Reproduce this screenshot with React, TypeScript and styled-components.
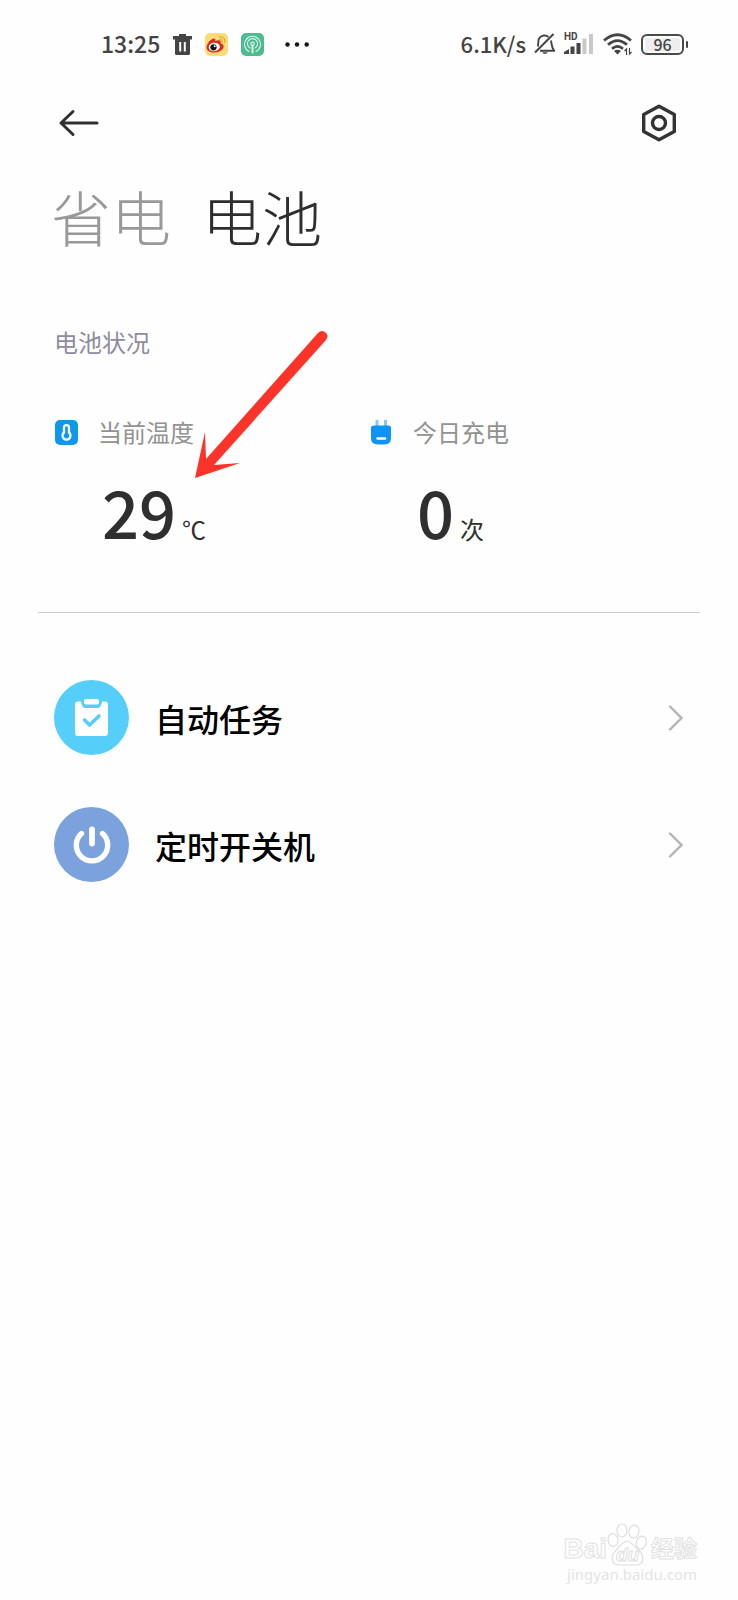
import React from 'react';
import styled, { createGlobalStyle } from 'styled-components';

const GlobalStyle = createGlobalStyle`
  * { box-sizing: border-box; }
  body {
    margin: 0;
    background: #fefefe;
    color: #333;
    font-family: "Noto Sans CJK SC", sans-serif;
  }
  button { border: 0; padding: 0; background: none; font: inherit; color: inherit; cursor: pointer; }
  svg { display: block; flex: none; overflow: visible; }
  h1, h2, p { margin: 0; font-weight: 400; }
`;

const Page = styled.div`
  position: relative;
  display: flex;
  flex-direction: column;
  min-height: 100vh;
`;

const StatusBar = styled.header`
  display: flex;
  justify-content: space-between;
  align-items: center;
  height: 88px;
  padding: 0 50px 0 101px;
  color: #444;
  font-weight: 500;
  line-height: 28px;
`;

const StatusGroup = styled.div<{ $gap: number }>`
  display: flex;
  align-items: center;
  gap: ${(p) => p.$gap}px;
`;

const StatusText = styled.span<{ $size: number }>`
  padding-bottom: 2px;
  font-size: ${(p) => p.$size}px;
`;

const Overflow = styled.span`
  padding-left: 8px;
`;

const Battery = styled.div`
  display: flex;
  align-items: center;
  gap: 2px;

  &::after {
    content: '';
    width: 2px;
    height: 7px;
    border-radius: 1px;
    background: #444;
  }
`;

const BatteryShell = styled.span`
  display: flex;
  align-items: center;
  justify-content: center;
  width: 43px;
  height: 21px;
  border: 2px solid #4a4a4a;
  border-radius: 6px;
  background: #eee;
  box-shadow: inset 0 0 0 2px #fefefe;
  font-size: 16px;
  line-height: 16px;
`;

const Toolbar = styled.div`
  display: flex;
  justify-content: space-between;
  align-items: center;
  height: 70px;
  padding: 0 61px 0 58px;
`;

const Tabs = styled.nav`
  display: flex;
  gap: 31px;
  padding: 14px 51px 0;
`;

const Tab = styled.button<{ $active?: boolean }>`
  color: ${(p) => (p.$active ? '#2e2e2e' : '#999')};
  font-size: 60px;
  font-weight: 300;
  line-height: 88px;
`;

const Condition = styled.section`
  position: relative;
  margin: 0 38px;
  padding: 64px 16px 41px;
  border-bottom: 1px solid #ccc;
`;

const SectionTitle = styled.h2`
  color: #8f8ba0;
  font-size: 24px;
  line-height: 36px;
`;

const Metrics = styled.div`
  display: grid;
  grid-template-columns: 1fr 1fr;
  padding-top: 54px;
`;

const MetricLabel = styled.p`
  display: flex;
  align-items: center;
  gap: 20px;
  color: #929292;
  font-size: 24px;
  line-height: 36px;
`;

const MetricValue = styled.p`
  display: flex;
  align-items: baseline;
  gap: 6px;
  padding: 19px 0 0 48px;
  color: #2f2f2f;
  font-size: 24px;
  line-height: 84px;
`;

const Amount = styled.strong`
  font-size: 65px;
  font-weight: 500;
`;

const Pointer = styled.svg`
  position: absolute;
  top: 70px;
  left: 150px;
`;

const List = styled.ul`
  display: flex;
  flex-direction: column;
  gap: 52px;
  margin: 0;
  padding: 67px 54px;
  list-style: none;
`;

const Row = styled.button`
  display: flex;
  align-items: center;
  gap: 26px;
  width: 100%;
  text-align: left;
`;

const Badge = styled.span<{ $color: string }>`
  display: flex;
  align-items: center;
  justify-content: center;
  width: 75px;
  height: 75px;
  border-radius: 50%;
  background: ${(p) => p.$color};
`;

const RowName = styled.span`
  flex: 1;
  color: #000;
  font-size: 32px;
  font-weight: 500;
  line-height: 48px;
`;

const Watermark = styled.div`
  position: absolute;
  right: 41px;
  bottom: 18px;
  color: #fefefe;
  font-family: "Liberation Sans", "Noto Sans CJK SC", sans-serif;
  -webkit-text-stroke: 1px #e2e2e2;
`;

const Brand = styled.div`
  display: flex;
  align-items: flex-end;
  font-size: 28px;
  font-weight: 700;
  line-height: 34px;
`;

const BrandName = styled.span`
  padding-left: 4px;
  font-size: 23px;
`;

const Site = styled.div`
  color: #e4e4e4;
  font-family: "Noto Sans", sans-serif;
  font-size: 15px;
  line-height: 16px;
  text-align: right;
  -webkit-text-stroke: 0;
`;

const TrashIcon = () => (
  <svg width="19" height="21" viewBox="0 0 19 21" fill="#444">
    <path d="M6 0h7v2h6v3.500H0V2h6z" />
    <path fillRule="evenodd" d="M2 5h15v14.500q0 1.500-1.500 1.500h-12Q2 21 2 19.500zM6.200 8v9.500h2V8zm4.600 0v9.500h2V8z" />
  </svg>
);

const WeiboIcon = () => (
  <svg width="23" height="23" viewBox="0 0 23 23">
    <rect width="23" height="23" rx="5" fill="#fbdc79" />
    <path d="M1.500 14.500C1.500 10.500 7 4.500 9.700 5.700c1 .5.700 1.600.5 2.200 2.500-1 5.300-1.200 5.600.7.100.8-.3 1.500-.3 1.700 2 .6 3.300 1.700 3.200 3.500-.2 3-4.400 5.700-9.200 5.700-4.500 0-8-2-8-5z" fill="#dc2d20" />
    <ellipse cx="9.300" cy="14" rx="5.600" ry="4.200" transform="rotate(-8 9 14)" fill="#fff" />
    <circle cx="8.500" cy="14.300" r="3.100" fill="#111" />
    <circle cx="9.700" cy="13.200" r="1" fill="#fff" />
    <path d="M14.500 4c3.700-.8 6.300 1.800 5.300 5.500M14.800 6.500c1.700-.2 2.700.8 2.400 2.500" fill="none" stroke="#e8ad32" strokeWidth="1.300" strokeLinecap="round" />
  </svg>
);

const CastIcon = () => (
  <svg width="23" height="23" viewBox="0 0 23 23" fill="none" stroke="#d8f4e8" strokeWidth="1.100" strokeLinecap="round">
    <rect width="23" height="23" rx="5" fill="#4dba91" stroke="none" />
    <path d="M8 18.500a8 8 0 1 1 7 0M9 15a5 5 0 1 1 5 0" />
    <circle cx="11.500" cy="10.800" r="1.700" />
    <path d="M11.500 12.500v7" strokeWidth="2" />
  </svg>
);

const MoreIcon = () => (
  <svg width="25" height="5" viewBox="0 0 25 5" fill="#151515">
    <circle cx="2.500" cy="2.500" r="2.200" />
    <circle cx="12" cy="2.500" r="2.200" />
    <circle cx="21.700" cy="2.500" r="2.200" />
  </svg>
);

const MutedIcon = () => (
  <svg width="22" height="22" viewBox="0 0 22 22" fill="none" stroke="#444" strokeWidth="1.900" strokeLinejoin="round">
    <path d="M14.500 4C12 1.500 7 2 5 5.700 3.900 8 4.600 10.500 3.800 13.500M17 7.500c.8 3-.1 6 3.300 10.300H6" />
    <path d="M1 19.500L19.500 1" />
    <path d="M8 19.300q3 3.500 6 0z" fill="#444" stroke="none" />
  </svg>
);

const SignalIcon = () => (
  <svg width="31" height="22" viewBox="0 0 31 22" fill="#444">
    <text x="0" y="7" fontFamily="Roboto, sans-serif" fontSize="10" fontWeight="700">HD</text>
    <path d="M0 21v-2l5-3v5z" />
    <path d="M6.500 13.500h4V21h-4zM12.500 10h4v11h-4z" />
    <path d="M18.500 5.500h4V21h-4zM25 1h4v20h-4z" fill="#c8c8c8" />
  </svg>
);

const WifiIcon = () => (
  <svg width="30" height="22" viewBox="0 0 30 22" fill="none" stroke="#444" strokeWidth="2.700">
    <path d="M1 7.500Q14.500-4 28 7.500M5 11.800q9.500-8.500 19 0M9 15.800q5.500-4.800 11 0" />
    <path d="M14.500 21.500l-3.500-3.500q3.500-2.500 7 0z" fill="#444" stroke="none" />
    <path d="M23.500 22v-6l-2 2M26.500 15v6l2-2" strokeWidth="1.200" />
  </svg>
);

const BackIcon = () => (
  <svg width="42" height="28" viewBox="0 0 42 28" fill="none" stroke="#303030" strokeWidth="3" strokeLinecap="round" strokeLinejoin="round">
    <path d="M15 2.500L3 14l12 11.500M3 14h36" />
  </svg>
);

const SettingsIcon = () => (
  <svg width="36" height="38" viewBox="0 0 36 38" fill="none" stroke="#333" strokeWidth="3.400" strokeLinejoin="round">
    <path d="M18 2.200L33.300 10.500v17L18 35.800 2.700 27.500v-17z" />
    <circle cx="18" cy="19" r="6.500" />
  </svg>
);

const ThermometerIcon = () => (
  <svg width="24" height="25" viewBox="0 0 24 25">
    <rect x="1" width="23" height="25" rx="5" fill="#0f97ec" />
    <path d="M10 12.500V7.700a2.500 2.500 0 0 1 5 0v4.800a4 4 0 1 1-5 0z" fill="none" stroke="#fff" strokeWidth="2.300" />
  </svg>
);

const PlugIcon = () => (
  <svg width="24" height="25" viewBox="0 0 24 25">
    <path d="M6.500 0h3v6h-3zM15 0h3v6h-3z" fill="#80cbfa" />
    <path d="M5 5.500h14.500q2.500 0 2.500 2.500v10q0 6.500-6.500 6.500h-6.500Q2 24.500 2 18V8q0-2.500 3-2.500z" fill="#0f93f4" />
    <path d="M8.500 18.500h7.500" stroke="#fff" strokeWidth="2.500" strokeLinecap="round" />
  </svg>
);

const TaskIcon = () => (
  <svg width="33" height="38" viewBox="0 0 33 38">
    <path d="M3 2.500h3q1 6.500 4 6.500h13q3 0 4-6.500h3q3 0 3 3V34q0 3-3 3H3q-3 0-3-3V5.500q0-3 3-3z" fill="#fff" />
    <rect x="9" width="15" height="5.500" rx="2" fill="#fff" />
    <path d="M9.500 21l5 5L24 17" fill="none" stroke="#55cff9" strokeWidth="3.600" strokeLinecap="round" strokeLinejoin="round" />
  </svg>
);

const PowerIcon = () => (
  <svg width="38" height="38" viewBox="0 0 38 38" fill="none" stroke="#fff" strokeLinecap="round">
    <path d="M8.500 7.500a15.700 15.700 0 1 0 21 0" strokeWidth="5.400" />
    <path d="M19 3.500v14" strokeWidth="5.800" />
  </svg>
);

const ChevronIcon = () => (
  <svg width="16" height="28" viewBox="0 0 16 28" fill="none" stroke="#b3b3b3" strokeWidth="2.400" strokeLinecap="round">
    <path d="M2 2.500L13.500 14 2 25.500" />
  </svg>
);

const PawIcon = () => (
  <svg width="40" height="43" viewBox="0 0 40 43" fill="#fefefe" stroke="#dedede" strokeWidth="1.200">
    <ellipse cx="6" cy="17" rx="5" ry="6.500" transform="rotate(-8 6 17)" />
    <ellipse cx="15" cy="7.500" rx="5" ry="6.500" />
    <ellipse cx="27" cy="8.500" rx="5" ry="6.500" transform="rotate(10 27 8)" />
    <ellipse cx="34.500" cy="19.500" rx="5" ry="6.500" transform="rotate(15 34 19)" />
    <path d="M20 18.500c-5 0-7 5-11 9-5 4.500-6 14 3 14.500h17c9-.5 8-10 3-14.500-4.500-4-7-9-12-9z" />
    <text x="9" y="38" fontSize="19" fontStyle="italic" strokeWidth="1">du</text>
  </svg>
);

const rows = [
  { name: '自动任务', color: '#55cff9', icon: <TaskIcon /> },
  { name: '定时开关机', color: '#7ba2dc', icon: <PowerIcon /> },
];

export default function App() {
  return (
    <Page>
      <GlobalStyle />
      <StatusBar>
        <StatusGroup $gap={13}>
          <StatusText $size={23}>13:25</StatusText>
          <TrashIcon />
          <WeiboIcon />
          <CastIcon />
          <Overflow><MoreIcon /></Overflow>
        </StatusGroup>
        <StatusGroup $gap={8}>
          <StatusText $size={22}>6.1K/s</StatusText>
          <MutedIcon />
          <SignalIcon />
          <WifiIcon />
          <Battery>
            <BatteryShell>96</BatteryShell>
          </Battery>
        </StatusGroup>
      </StatusBar>

      <Toolbar>
        <button type="button" aria-label="返回"><BackIcon /></button>
        <button type="button" aria-label="设置"><SettingsIcon /></button>
      </Toolbar>

      <Tabs>
        <Tab type="button">省电</Tab>
        <Tab type="button" $active aria-current="page">电池</Tab>
      </Tabs>

      <Condition>
        <SectionTitle>电池状况</SectionTitle>
        <Metrics>
          <div>
            <MetricLabel><ThermometerIcon />当前温度</MetricLabel>
            <MetricValue><Amount>29</Amount>℃</MetricValue>
          </div>
          <div>
            <MetricLabel><PlugIcon />今日充电</MetricLabel>
            <MetricValue><Amount>0</Amount>次</MetricValue>
          </div>
        </Metrics>
        <Pointer width="144" height="152" viewBox="0 0 144 152" fill="#fb3329" aria-hidden="true">
          <path d="M7 148l10-46 1 27L130 3q4-4 8 0 3 3 0 7L26 135l26-2z" />
        </Pointer>
      </Condition>

      <List>
        {rows.map((row) => (
          <li key={row.name}>
            <Row type="button">
              <Badge $color={row.color}>{row.icon}</Badge>
              <RowName>{row.name}</RowName>
              <ChevronIcon />
            </Row>
          </li>
        ))}
      </List>

      <Watermark>
        <Brand>
          <span>Bai</span>
          <PawIcon />
          <BrandName>经验</BrandName>
        </Brand>
        <Site>jingyan.baidu.com</Site>
      </Watermark>
    </Page>
  );
}
